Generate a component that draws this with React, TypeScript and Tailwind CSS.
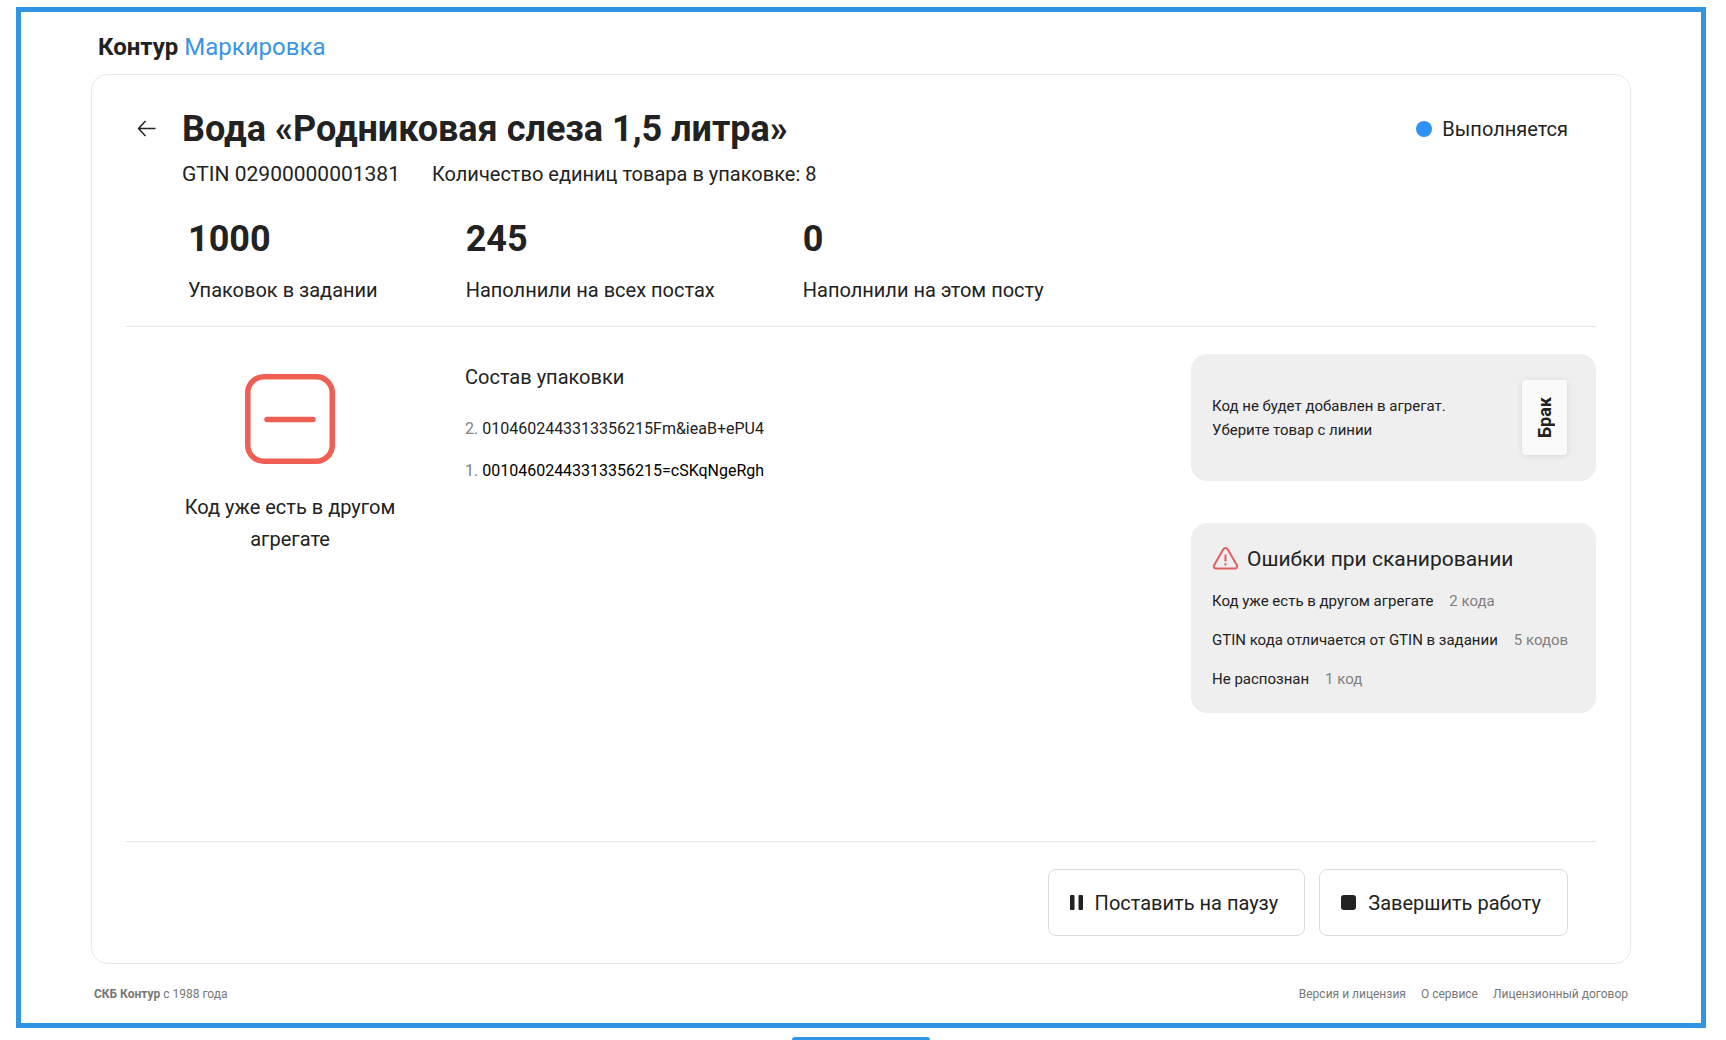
import React from "react";

const stats = [
  { value: "1000", label: "Упаковок в задании" },
  { value: "245", label: "Наполнили на всех постах" },
  { value: "0", label: "Наполнили на этом посту" },
];

const scanErrors = [
  { label: "Код уже есть в другом агрегате", count: "2 кода" },
  { label: "GTIN кода отличается от GTIN в задании", count: "5 кодов" },
  { label: "Не распознан", count: "1 код" },
];

const footerLinks = ["Версия и лицензия", "О сервисе", "Лицензионный договор"];

const ArrowIcon = () => (
  <svg width="20" height="18" viewBox="0 0 20 18" fill="none" stroke="#222" strokeWidth="1.5">
    <path d="M18.5 8.5H1.5M8.5 1 1.5 8.5 8.5 16" strokeLinejoin="round" />
  </svg>
);

const MinusIcon = () => (
  <svg width="90" height="90" viewBox="0 0 90 90" fill="none" stroke="#f05f54" strokeWidth="5.5">
    <rect x="2.75" y="2.75" width="84.5" height="84.5" rx="16" />
    <path d="M22 45.5h46" strokeLinecap="round" />
  </svg>
);

const WarningIcon = () => (
  <svg width="27" height="24" viewBox="0 0 27 24" fill="none" stroke="#e0605f" strokeWidth="2">
    <path d="M11.3 2.3a2.6 2.6 0 0 1 4.4 0l9.2 15.9a2.2 2.2 0 0 1-1.9 3.3H4a2.2 2.2 0 0 1-1.9-3.3Z" />
    <path d="M13.5 7.5v7M13.5 16.3v2.2" />
  </svg>
);

const App = () => {
  return (
    <div className="flex min-h-screen flex-col bg-white pt-[7px] pr-5 pl-4 font-['Roboto',sans-serif] text-[#222]">
      <div className="flex flex-1 flex-col border-5 border-[#3295e4] px-[70px]">
        <header className="flex gap-1.5 px-[7px] pt-[19px] pb-[11px] text-2xl leading-8">
          <span className="font-bold">Контур</span>
          <span className="text-[#3c94e6]">Маркировка</span>
        </header>

        <main className="flex flex-1 flex-col rounded-2xl border border-[#e9e9e9] px-[34px]">
          <section className="border-b border-[#e6e6e6] pt-[34px] pb-[22px]">
            <div className="flex items-center">
              <button type="button" aria-label="Назад" className="w-14 pl-[11px]">
                <ArrowIcon />
              </button>
              <h1 className="text-4xl font-bold">Вода «Родниковая слеза 1,5 литра»</h1>
              <div className="ml-auto flex items-center gap-2.5 pr-7 text-xl">
                <span className="size-4 rounded-full bg-[#2f91f5]" />
                Выполняется
              </div>
            </div>

            <div className="mt-[11px] flex items-baseline gap-8 pl-14">
              <p className="text-[21px] leading-7">GTIN 02900000001381</p>
              <p className="text-xl">Количество единиц товара в упаковке: 8</p>
            </div>

            <div className="mt-[31px] flex gap-[88px] pl-[62px]">
              {stats.map((stat) => (
                <div key={stat.label}>
                  <p className="text-4xl font-bold">{stat.value}</p>
                  <p className="mt-[17px] text-xl">{stat.label}</p>
                </div>
              ))}
            </div>
          </section>

          <section className="flex flex-1 items-start pl-14">
            <div className="flex w-[216px] flex-col items-center pt-[47px]">
              <MinusIcon />
              <p className="mt-[27px] text-center text-xl leading-8">
                Код уже есть в другом агрегате
              </p>
            </div>

            <div className="ml-[67px] pt-9">
              <h2 className="text-xl">Состав упаковки</h2>
              <ol className="mt-[26px] flex flex-col gap-[18px]">
                <li>
                  <span className="text-[#808080]">2.</span> 0104602443313356215Fm&amp;ieaB+ePU4
                </li>
                <li className="text-black">
                  <span className="text-[#808080]">1.</span> 00104602443313356215=cSKqNgeRgh
                </li>
              </ol>
            </div>

            <div className="ml-auto flex w-[405px] flex-col gap-[42px] pt-[27px] text-[15px] leading-6">
              <div className="flex items-center justify-between rounded-2xl bg-[#efefef] py-[26px] pr-[29px] pl-[21px]">
                <p>
                  Код не будет добавлен в агрегат.
                  <br />
                  Уберите товар с линии
                </p>
                <button
                  type="button"
                  className="flex h-[75px] w-[45px] items-center justify-center rounded-sm bg-[#fafafa] shadow-[0_1px_6px_rgba(0,0,0,0.1)]"
                >
                  <span className="rotate-180 text-lg leading-6 font-bold [writing-mode:vertical-rl]">
                    Брак
                  </span>
                </button>
              </div>

              <div className="rounded-2xl bg-[#efefef] px-[21px] pt-[22px] pb-[22px]">
                <h2 className="flex items-center gap-2 text-[21px] leading-7">
                  <WarningIcon />
                  Ошибки при сканировании
                </h2>
                <ul className="mt-4 flex flex-col gap-[15px]">
                  {scanErrors.map((error) => (
                    <li key={error.label} className="flex gap-4 whitespace-nowrap">
                      {error.label}
                      <span className="text-[#808080]">{error.count}</span>
                    </li>
                  ))}
                </ul>
              </div>
            </div>
          </section>

          <section className="flex justify-end gap-3.5 border-t border-[#e6e6e6] py-[27px] pr-7 text-xl">
            <button
              type="button"
              className="flex h-[67px] items-center gap-3 rounded-lg border border-[#dcdcdc] pr-[26px] pl-[21px]"
            >
              <svg width="13" height="15" viewBox="0 0 13 15" fill="#222">
                <rect width="4.5" height="15" rx="1" />
                <rect x="8.5" width="4.5" height="15" rx="1" />
              </svg>
              Поставить на паузу
            </button>
            <button
              type="button"
              className="flex h-[67px] items-center gap-3 rounded-lg border border-[#dcdcdc] pr-[26px] pl-[21px]"
            >
              <span className="size-[15px] rounded-[3px] bg-[#222]" />
              Завершить работу
            </button>
          </section>
        </main>

        <footer className="flex justify-between px-[3px] pt-[22px] pb-[21px] text-xs text-[#777]">
          <p>
            <b>СКБ Контур</b> с 1988 года
          </p>
          <nav className="flex gap-[15px]">
            {footerLinks.map((link) => (
              <a key={link} href="#">
                {link}
              </a>
            ))}
          </nav>
        </footer>
      </div>

      <div className="mt-[9px] h-[3px] w-[138px] self-center rounded-t-[3px] bg-[#3295e4]" />
    </div>
  );
};

export default App;
